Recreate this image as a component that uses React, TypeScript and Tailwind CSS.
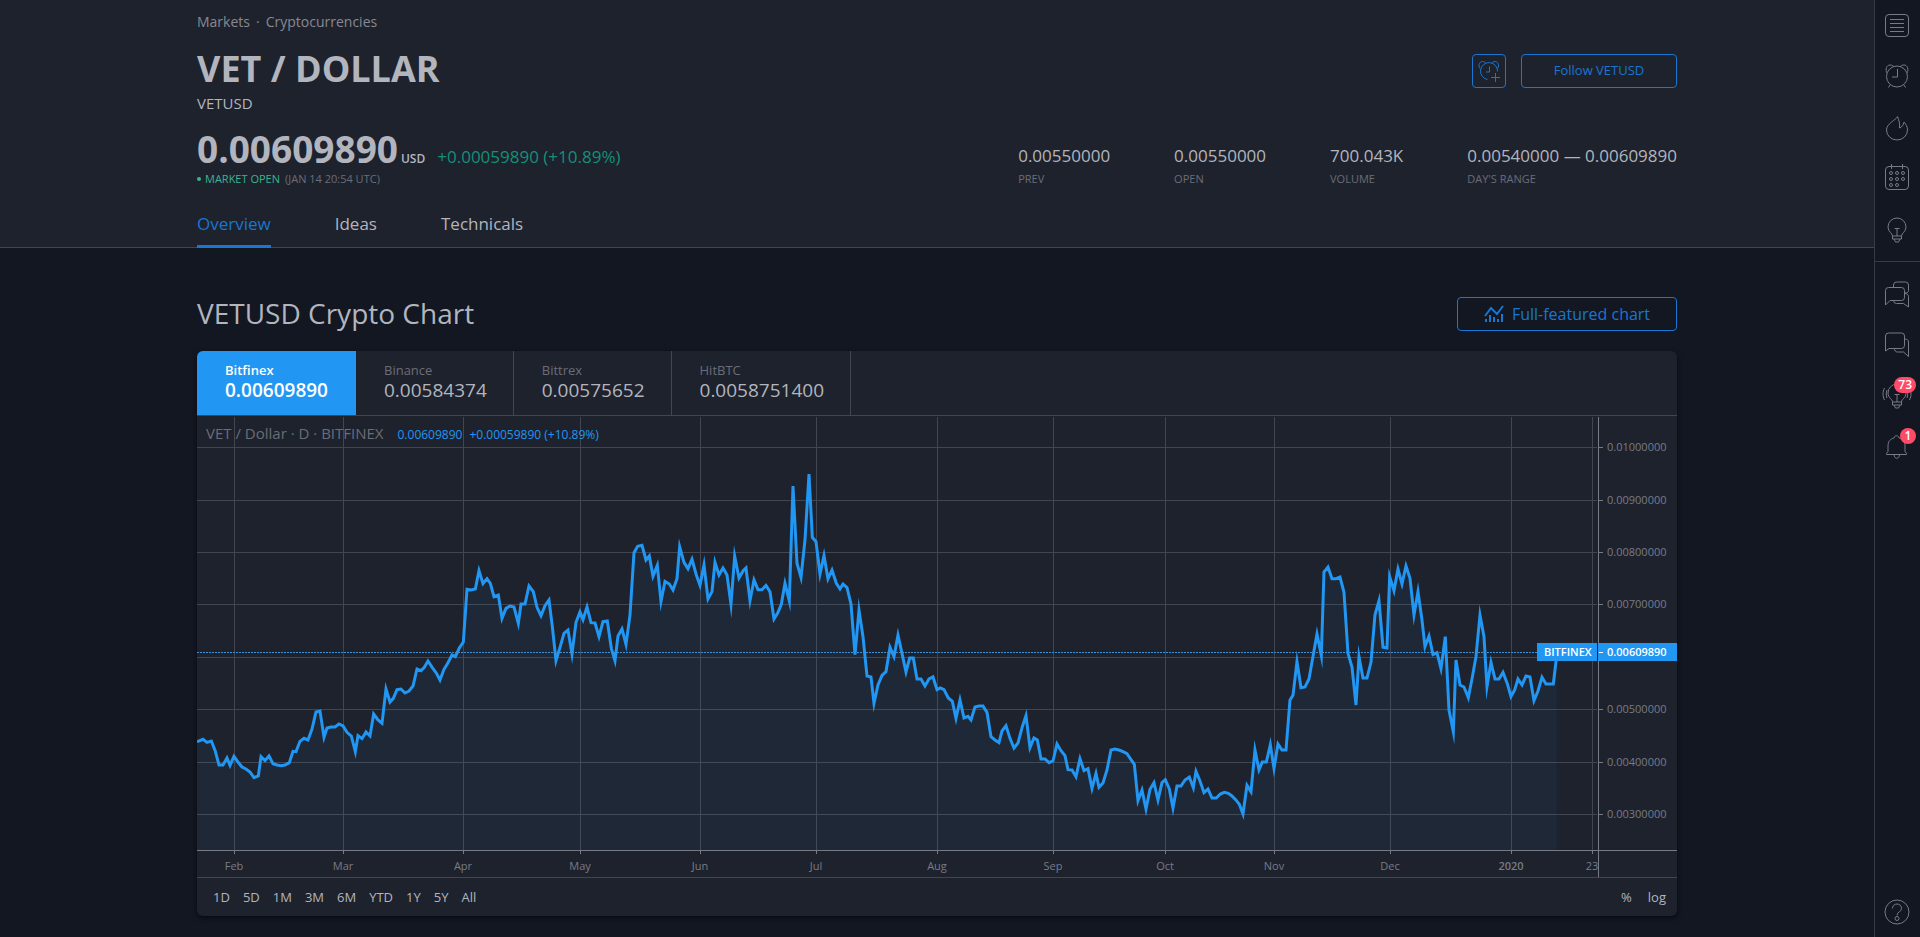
import type { ReactNode } from 'react';

const crumbs = ['Markets', 'Cryptocurrencies'];

const stats = [
  { label: 'Prev', value: '0.00550000' },
  { label: 'Open', value: '0.00550000' },
  { label: 'Volume', value: '700.043K' },
  { label: "Day's range", value: '0.00540000 — 0.00609890' },
];

const exchanges = [
  { name: 'Bitfinex', price: '0.00609890', active: true },
  { name: 'Binance', price: '0.00584374' },
  { name: 'Bittrex', price: '0.00575652' },
  { name: 'HitBTC', price: '0.0058751400' },
];

const ranges = ['1D', '5D', '1M', '3M', '6M', 'YTD', '1Y', '5Y', 'All'];

const months = [
  { x: 37, label: 'Feb' },
  { x: 146, label: 'Mar' },
  { x: 266, label: 'Apr' },
  { x: 383, label: 'May' },
  { x: 503, label: 'Jun' },
  { x: 619, label: 'Jul' },
  { x: 740, label: 'Aug' },
  { x: 856, label: 'Sep' },
  { x: 968, label: 'Oct' },
  { x: 1077, label: 'Nov' },
  { x: 1193, label: 'Dec' },
  { x: 1314, label: '2020', bold: true },
  { x: 1395, label: '23' },
];

const prices = [
  { y: 31, label: '0.01000000' },
  { y: 84, label: '0.00900000' },
  { y: 136, label: '0.00800000' },
  { y: 188, label: '0.00700000' },
  { y: 241, label: '0.00600000' },
  { y: 293, label: '0.00500000' },
  { y: 346, label: '0.00400000' },
  { y: 398, label: '0.00300000' },
];

// Daily closes in thirds of a chart unit, stored in blocks that each start at `from`
const series = [
  {
    from: -21,
    points:
      '21,905 24,904 39,898 51,907 64,903 76,934 87,975 99,975 111,954 120,976 132,949 144,966 156,981 168,987 180,996 192,1013 205,1008 213,950 225,962 237,948 249,971 261,975 273,977 285,975 298,968 309,934 318,935 330,904 342,895 354,900 366,867 378,816 390,813 402,892 411,864 423,861 435,861 447,852 459,858 471,877 484,888 496,935 504,887 516,896 528,876 540,888 551,822 564,840 576,850 588,747 600,786 610,775 621,749 633,747 645,759 657,753 669,738 681,687 693,692 703,682 714,663 727,683 739,699 750,720 762,688 774,668 786,645 796,650 808,624 820,606 831,448 843,450 856,447 867,392 879,431 891,416 901,430 912,470 925,465 936,535 948,505 960,498 972,501 985,550 993,492 1005,492 1017,438 1030,455 1041,502 1053,527 1065,497 1077,480 1087,560 1098,662 1110,622 1122,580 1134,570 1146,642 1158,547 1170,516 1179,539 1191,501 1203,548 1215,549 1227,590 1239,545 1252,543 1264,625 1275,662 1284,588 1296,567 1308,613 1320,525',
  },
  {
    from: 1209,
    points:
      '102,338 113,319 126,316 138,360 148,348 159,409 172,376 183,485 195,424 208,432 219,450 231,416 239,320 252,367 264,386 276,358 289,405 300,436 312,375 324,477 336,455 345,367 357,405 369,384 381,405 393,493 404,348 417,414 429,393 438,384 450,482 462,420 474,449 486,449 498,436 510,455 522,537 533,519 544,493 555,430 568,483 579,138 591,370 603,412 615,300 627,102 637,292 648,305 660,402 672,347 684,416 696,390 709,430 720,447 729,432 741,443 753,492 765,644 777,510 789,590 801,708 813,711 822,790 834,735 846,706 858,695 870,622 882,650 894,585 906,640 918,696 929,654 940,654 951,717 963,717 975,738 987,717 999,711 1011,749 1021,744 1032,749 1045,774 1057,784 1068,835 1080,780 1092,834 1104,829 1113,840 1125,801 1137,798 1149,798 1161,817 1173,890 1185,900 1197,908 1206,873 1218,857 1230,895 1242,924 1254,909 1267,860 1278,827 1290,923 1302,894 1312,900 1323,957 1335,957 1347,968 1359,963',
  },
  {
    from: 2409,
    points:
      '171,912 183,932 195,947 204,989 216,990 228,1010 240,956 252,992 264,986 276,1045 288,1000 297,1042 309,1029 321,990 333,930 345,927 357,930 369,935 381,941 391,956 403,973 414,1082 426,1050 438,1107 450,1048 462,1028 474,1080 486,1028 496,1019 508,1047 519,1104 531,1038 543,1038 555,1020 568,1011 580,1043 588,994 600,1023 612,1058 624,1047 636,1074 649,1074 661,1062 673,1057 685,1060 695,1067 707,1079 718,1093 729,1122 741,1036 753,1055 765,930 777,990 787,966 799,966 811,914 822,985 834,912 846,930 858,930 870,780 879,766 891,665 903,743 915,741 927,717 938,655 951,582 964,647 972,396 984,381 996,416 1008,416 1020,411 1032,457 1044,640 1056,681 1068,795 1077,650 1089,714 1101,714 1113,667 1125,525 1137,482 1149,622 1161,624',
  },
  {
    from: 3369,
    points:
      '209,410 222,452 234,387 246,432 258,378 270,415 282,525 294,455 306,540 315,620 327,588 339,644 351,638 363,686 376,590 387,810 400,875 408,660 420,735 432,741 445,773 457,712 468,650 480,525 492,590 501,740 513,667 525,717 537,717 549,697 562,731 573,770 584,750 594,717 606,735 618,708 630,711 642,782 654,753 666,712 678,732 700,732 711,640',
  },
];

const linePath =
  'M' +
  series
    .flatMap(({ from, points }) =>
      points.split(' ').map((p) => {
        const [x, y] = p.split(',').map(Number);
        return `${x + from} ${y}`;
      }),
    )
    .join('L');

function Icon({ size = 28, children }: { size?: number; children: ReactNode }) {
  return (
    <svg width={size} height={size} viewBox={`0 0 ${size} ${size}`} fill="none" stroke="currentColor" aria-hidden="true">
      {children}
    </svg>
  );
}

function PriceChart() {
  return (
    <svg viewBox="0 0 1480 461" className="block w-full font-['Open_Sans',sans-serif]" role="img" aria-label="VETUSD daily price">
      <g stroke="#434651" shapeRendering="crispEdges">
        {months.map((m) => (
          <path key={m.x} d={`M${m.x + 0.5} 1V434`} />
        ))}
        {prices.map((p) => (
          <path key={p.y} d={`M0 ${p.y + 0.5}H1400`} />
        ))}
      </g>

      <g transform="translate(0 24) scale(.33333)">
        <path d={`${linePath}V1230H0Z`} fill="#2196f3" fillOpacity=".05" />
        <path d={linePath} fill="none" stroke="#2196f3" strokeWidth="9" strokeMiterlimit="10" />
      </g>
      <path d="M0 236.5H1340" stroke="#3a8fd6" strokeDasharray="2 1" />

      <g stroke="#787b86" shapeRendering="crispEdges">
        <path d="M0 434.5H1480M1401.5 1V461" />
        {months.map((m) => (
          <path key={m.x} d={`M${m.x + 0.5} 434V438`} />
        ))}
        {prices.map((p) => (
          <path key={p.y} d={`M1402 ${p.y + 0.5}H1406`} />
        ))}
      </g>

      <g fill="#787b86" fontSize="11">
        {prices.map((p) => (
          <text key={p.y} x="1410" y={p.y + 4}>
            {p.label}
          </text>
        ))}
        {months.map((m) => (
          <text key={m.x} x={m.x} y="454" textAnchor="middle" fontWeight={m.bold ? 600 : 400}>
            {m.label}
          </text>
        ))}
      </g>

      <path d="M1340 227H1400V245H1340ZM1401 227H1480V245H1401Z" fill="#2196f3" />
      <path d="M1402 236.5H1406" stroke="#fff" />
      <g fill="#fff" fontSize="11" fontWeight="600">
        <text x="1347" y="240">
          BITFINEX
        </text>
        <text x="1410" y="240">
          0.00609890
        </text>
      </g>
    </svg>
  );
}

function SideButton({ label, badge, children }: { label: string; badge?: string; children: ReactNode }) {
  return (
    <button type="button" aria-label={label} className="relative flex h-[51px] w-full items-center pl-[5px]">
      <Icon size={34}>{children}</Icon>
      {badge && (
        <span className="absolute top-[7px] right-1 flex h-4 min-w-4 items-center justify-center rounded-full bg-[#ff4a68] px-1 text-[12px] leading-4 font-semibold text-white">
          {badge}
        </span>
      )}
    </button>
  );
}

const bulb = (
  <>
    <path d="M12.5 23c0-3-4.500-4-4.500-9a9 9 0 0 1 18 0c0 5-4.500 6-4.500 9Z" />
    <path d="M12.500 23v3h9v-3M14 26l1.500 3h3l1.500-3M14.500 15.500h5M17 15.500v7.500" />
  </>
);

function Sidebar() {
  return (
    <aside className="flex w-[46px] shrink-0 flex-col border-l border-[#363a45] text-[#787b86]">
      <SideButton label="Watchlist">
        <rect x="5.500" y="5.500" width="23" height="22" rx="3.500" />
        <path d="M10 10.500h14M10 14.500h14M10 18.500h14M10 22.500h14" />
      </SideButton>
      <SideButton label="Alerts">
        <circle cx="17" cy="16.500" r="10.500" />
        <path d="M17.500 9v8H12M10 25l-1.500 2.500M24 25l1.500 2.500" />
        <path d="M7 13C5 9.500 6.500 5 10 5c2 0 3 .8 4 1.800M27 13c2-3.500.500-8-3-8-2 0-3 .8-4 1.800" />
      </SideButton>
      <SideButton label="Hotlists">
        <path d="M17.500 5.500C16 9 6.500 12.500 6.500 19a10.500 10 0 0 0 21 0c0-3-1.500-6-3.500-8-.5 3-2 5-4.500 6 .5-4-.5-8-2-11.500Z" />
      </SideButton>
      <SideButton label="Calendar">
        <rect x="5.500" y="4.500" width="23" height="23" rx="3.500" />
        <path d="M11.500 2v5M22.500 2v5" />
        {[11, 17, 23].map((x) => (
          <g key={x}>
            <circle cx={x} cy="11" r="1.500" />
            <circle cx={x} cy="17" r="1.500" />
            {x < 20 && <circle cx={x} cy="23" r="1.500" />}
          </g>
        ))}
      </SideButton>
      <SideButton label="Ideas">{bulb}</SideButton>

      <div className="my-[6px] h-px bg-[#363a45]" />

      <SideButton label="Public chats">
        <path d="M5.500 28V13.500a3 3 0 0 1 3-3h13a3 3 0 0 1 3 3v7a3 3 0 0 1-3 3H10Z" />
        <path d="M13.500 10.500V8a3 3 0 0 1 3-3h9a3 3 0 0 1 3 3v5.500c0 2-1.500 2.500-4 2.500M24.500 16.500c2.500 0 4 1 4 3V30l-5-3.500h-7a3 3 0 0 1-3-3" />
      </SideButton>
      <SideButton label="Private chats">
        <path d="M5.500 23V8a3 3 0 0 1 3-3h13a3 3 0 0 1 3 3v9.500a3 3 0 0 1-3 3H9Z" />
        <path d="M24.500 11c2.500 0 4 1 4 3v14.500l-5-4.500h-6a3 3 0 0 1-3-3.500" />
      </SideButton>
      <SideButton label="Ideas stream" badge="73">
        {bulb}
        <path d="M4.500 9c-2 4-2 8 0 12M7 11c-1 3-1 5 0 8M29.500 9c2 4 2 8 0 12M27 11c1 3 1 5 0 8" />
      </SideButton>
      <SideButton label="Notifications" badge="1">
        <path d="M6.500 24.500h20v-1l-1.500-2v-5.500c0-5-2.500-7-6-8 0-3-5-3-5 0-3.500 1-6 3-6 8v5.500l-1.500 2ZM14 24.500c0 5 5.500 5 5.500 0" />
      </SideButton>

      <div className="mt-auto">
        <SideButton label="Help">
          <circle cx="17" cy="17" r="12" />
          <circle cx="17" cy="23.500" r="2" />
          <path d="M12.500 13.500c0-6 9-6 9 0 0 3.500-4.500 3-4.500 7" />
        </SideButton>
      </div>
    </aside>
  );
}

export default function App() {
  return (
    <div className="flex min-h-screen bg-[#131722] font-['Open_Sans',sans-serif] text-[#b2b5be]">
      <main className="min-w-0 flex-1">
        <header className="border-b border-[#434651] bg-[#1e222d]">
          <div className="mx-auto max-w-[1480px] pt-3">
            <nav aria-label="Breadcrumb" className="flex gap-[6px] text-[14px] leading-5 text-[#868993]">
              <a href="#markets">{crumbs[0]}</a>
              <span>·</span>
              <a href="#crypto">{crumbs[1]}</a>
            </nav>

            <div className="mt-[15px] flex items-start justify-between">
              <h1 className="text-[36px] leading-[44px] font-bold">VET / DOLLAR</h1>
              <div className="mt-[7px] flex gap-[15px] text-[#1976d2]">
                <button type="button" aria-label="Add alert" className="flex h-[34px] w-[34px] items-center justify-center rounded border border-[#1976d2]">
                  <Icon size={24}>
                    <path d="M10.500 20.500a8.500 8.500 0 1 1 10-8" />
                    <path d="M12.500 7.500v5.500H9M3 9.500C.5 6 3 2.500 5.500 2.500c1.500 0 2.500.7 3 1.500M20.500 9.500C23 6 20.500 2.500 18 2.500c-1.500 0-2.500.7-3 1.500M18.500 14v9M14 18.500h9" />
                  </Icon>
                </button>
                <button type="button" className="h-[34px] w-[156px] rounded border border-[#1976d2] text-[13px]">
                  Follow VETUSD
                </button>
              </div>
            </div>
            <p className="mt-[2px] text-[15px] leading-5">VETUSD</p>

            <div className="mt-[14px] flex items-end justify-between">
              <div>
                <div className="flex h-11 items-baseline">
                  <span className="text-[37px] leading-[44px] font-bold">0.00609890</span>
                  <span className="ml-[3px] text-[12px] leading-4 font-semibold">USD</span>
                  <span className="ml-3 text-[17px] leading-6 text-[#11917a]">+0.00059890 (+10.89%)</span>
                </div>
                <p className="flex items-center text-[11px] leading-4 text-[#6a6d78] uppercase">
                  <span className="mr-1 h-1 w-1 rounded-full bg-[#3bb391]" />
                  <span className="mr-[5px] text-[#3bb391]">Market open</span>
                  (Jan 14 20:54 UTC)
                </p>
              </div>
              <dl className="flex gap-16">
                {stats.map((s) => (
                  <div key={s.label} className="flex flex-col-reverse gap-[3px]">
                    <dt className="text-[11px] leading-4 text-[#6a6d78] uppercase">{s.label}</dt>
                    <dd className="text-[17px] leading-6">{s.value}</dd>
                  </div>
                ))}
              </dl>
            </div>

            <nav aria-label="Symbol" className="mt-[25px] -mb-px flex gap-16 text-[17px] leading-6">
              <a href="#overview" className="border-b-[3px] border-[#1976d2] pb-[9px] text-[#1976d2]">
                Overview
              </a>
              <a href="#ideas">Ideas</a>
              <a href="#technicals">Technicals</a>
            </nav>
          </div>
        </header>

        <section className="mx-auto mt-[49px] max-w-[1480px]">
          <div className="flex items-start justify-between">
            <h2 className="text-[28px] leading-8">VETUSD Crypto Chart</h2>
            <button type="button" className="flex h-[34px] w-[220px] items-center justify-center gap-2 rounded border border-[#1976d2] text-[16px] text-[#1976d2]">
              <Icon size={20}>
                <path d="M1 12l6-8 6 6 6-8" strokeWidth="2" />
                <path d="M2 18v-3M6 18v-7M10 18v-5M14 18v-3M18 18v-8" strokeWidth="2" />
              </Icon>
              Full-featured chart
            </button>
          </div>

          <div className="mt-5 overflow-hidden rounded-md bg-[#1e222d] shadow-[0_2px_5px_rgba(0,0,0,0.6)]">
            <div className="flex border-b border-[#434651]">
              {exchanges.map((e) => (
                <button
                  key={e.name}
                  type="button"
                  className={`flex h-16 flex-col pt-[11px] pl-7 text-left ${
                    e.active ? 'bg-[#2196f3] pr-7 text-white' : 'border-r border-[#434651] pr-[26px]'
                  }`}
                >
                  <span className={`text-[13px] leading-4 ${e.active ? 'font-semibold' : 'text-[#6a6d78]'}`}>{e.name}</span>
                  <span className={`text-[19px] leading-6 ${e.active ? 'font-semibold' : ''}`}>{e.price}</span>
                </button>
              ))}
            </div>

            <div className="relative">
              <PriceChart />
              <p className="absolute top-[6px] left-[9px] flex items-baseline text-[15px] leading-[22px] text-[#6a6d78]">
                VET / Dollar · D · BITFINEX
                <span className="ml-[14px] text-[12px] text-[#2196f3]">0.00609890</span>
                <span className="ml-[7px] text-[12px] text-[#2196f3]">+0.00059890 (+10.89%)</span>
              </p>
            </div>

            <div className="flex h-[39px] items-center justify-between border-t border-[#434651] pr-[11px] pl-4 text-[13px] leading-5">
              <div className="flex gap-[13px]">
                {ranges.map((r) => (
                  <button key={r} type="button">
                    {r}
                  </button>
                ))}
              </div>
              <div className="flex gap-4">
                <button type="button">%</button>
                <button type="button">log</button>
              </div>
            </div>
          </div>
        </section>
      </main>
      <Sidebar />
    </div>
  );
}
